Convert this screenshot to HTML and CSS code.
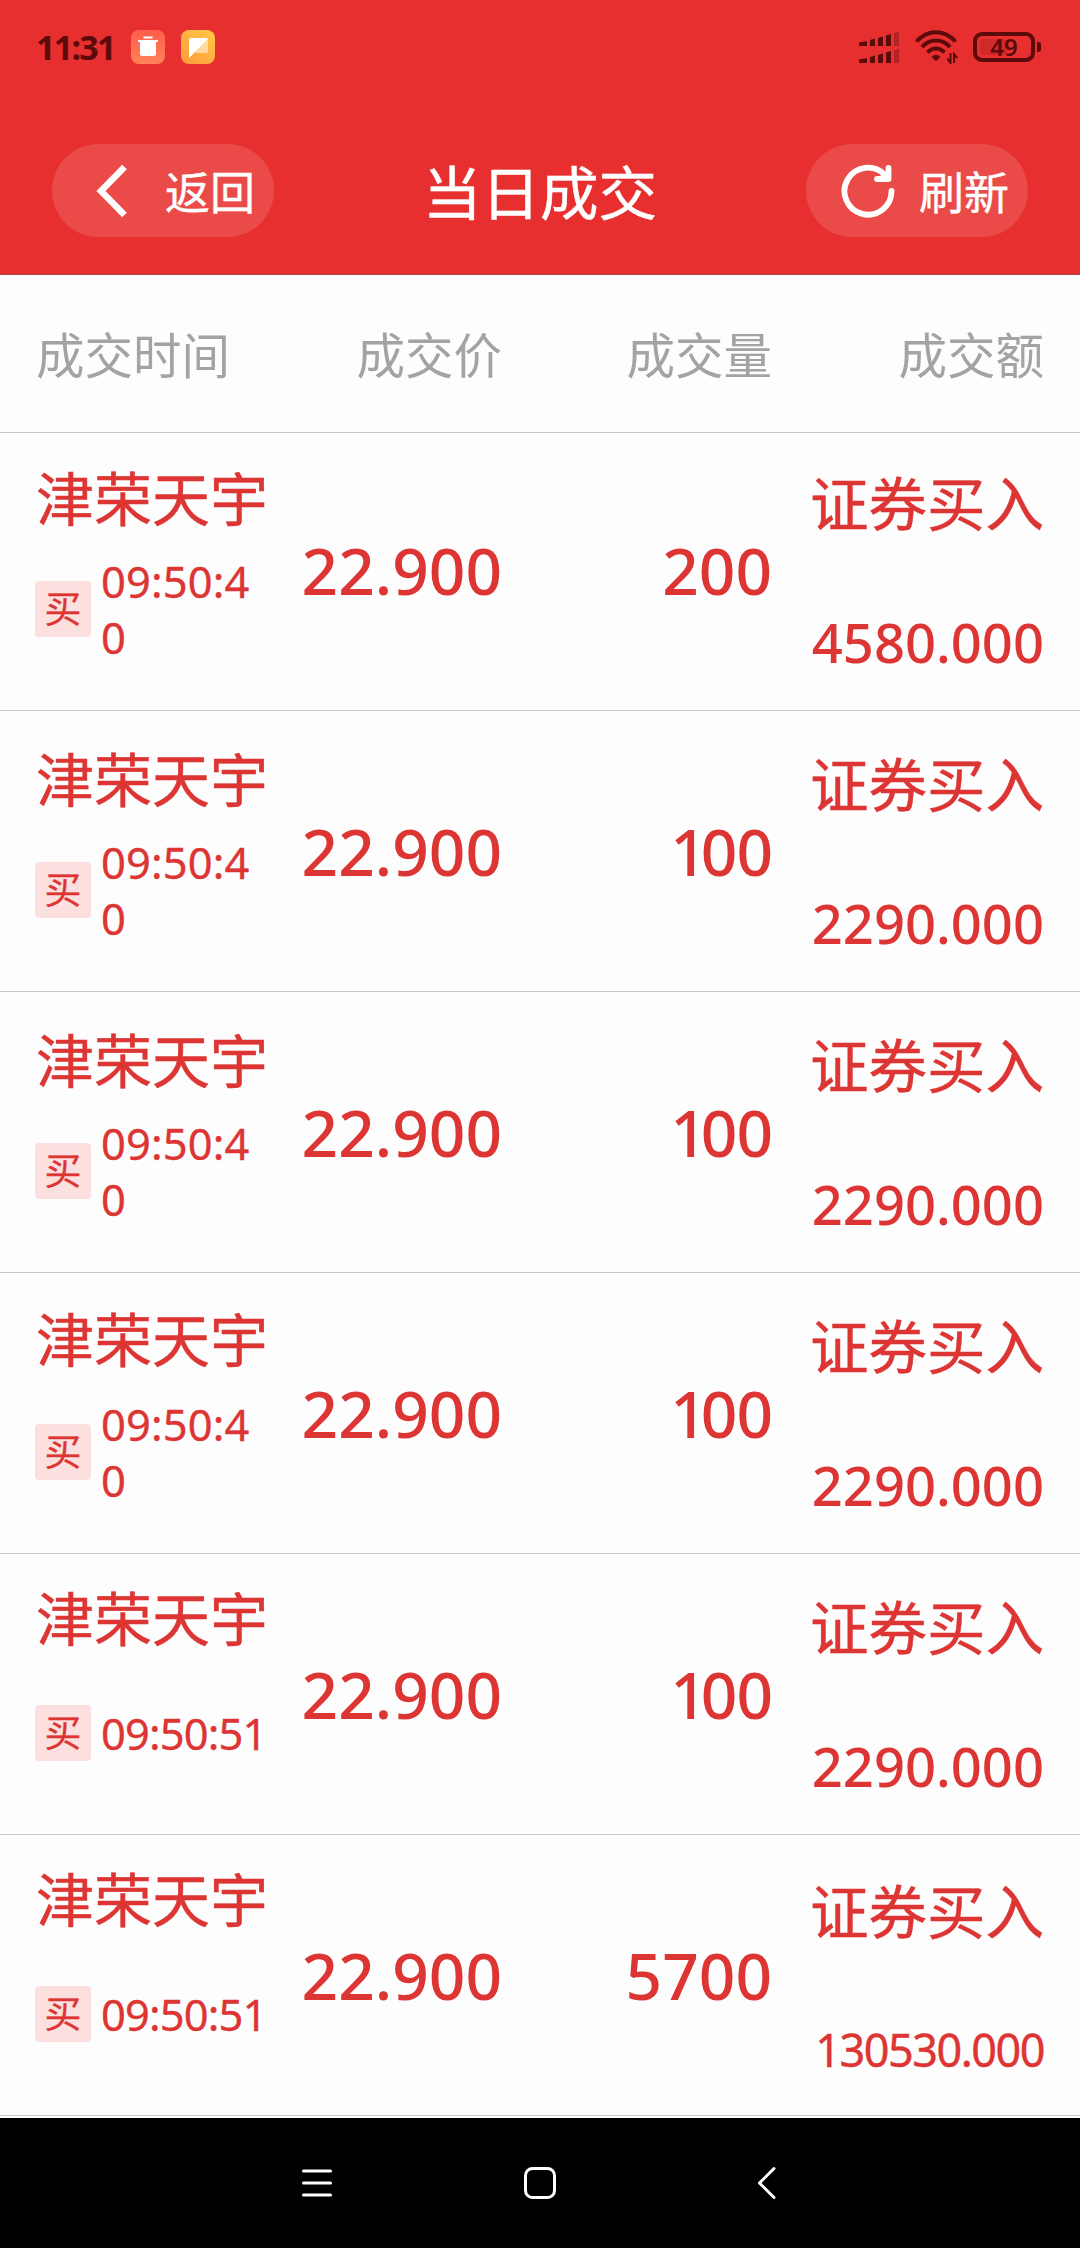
FILE: index.html
```html
<!DOCTYPE html>
<html lang="zh-CN">
<head>
  <meta charset="UTF-8" />
  <meta name="viewport" content="width=device-width, initial-scale=1.0" />
  <title>当日成交</title>
  <link rel="stylesheet" href="styles.css">
</head>
<body>

  <header>
    <div class="status-bar">
      <div class="status-left">
        <span class="clock">11:31</span>
        <svg class="app-icon" viewBox="0 0 34 34">
          <defs>
            <linearGradient id="trashBg" x1="0" y1="0" x2="0" y2="1">
              <stop offset="0" stop-color="#ff5e4c" />
              <stop offset="1" stop-color="#ff8258" />
            </linearGradient>
          </defs>
          <rect width="34" height="34" rx="8" fill="url(#trashBg)" />
          <path d="M12.500 6.500h9v2h-9zM7 10h20v2h-2V24q0 2-2 2H11q-2 0-2-2V12H7z" fill="#fff" />
        </svg>
        <svg class="app-icon" viewBox="0 0 34 34">
          <defs>
            <linearGradient id="noteBg" x1="1" y1="0" x2="0.300" y2="1">
              <stop offset="0" stop-color="#ffc848" />
              <stop offset="1" stop-color="#ffa03c" />
            </linearGradient>
          </defs>
          <rect width="34" height="34" rx="8" fill="url(#noteBg)" />
          <path d="M27 9v12q0 2-2 2H13z" fill="#fff" opacity="0.500" />
          <path d="M8 28V10q0-2 2-2h15q2 0 2 1z" fill="#fff" />
        </svg>
      </div>
      <div class="status-right">
        <svg class="signal" viewBox="0 0 40 31">
          <g fill="#5c0a0a">
            <path d="M0 10.500L8 9v5H1q-1 0-1-1zM11 8L16 6.500V14h-5zM19 6L24 4.500V14h-5zM27 3.500L32 2V14h-5z" />
            <path d="M0 27.500L8 26v5H1q-1 0-1-1zM11 25L16 23.500V31h-5zM19 23L24 21.500V31h-5zM27 20.500L32 19V31h-5z" />
          </g>
          <path d="M35 1.500Q37 0 40 0v14h-5zM35 18.500Q37 17 40 17v14h-5z" fill="#b32224" />
        </svg>
        <svg class="wifi" viewBox="0 0 44 34">
          <g fill="none" stroke="#5c0a0a" stroke-width="4">
            <path d="M1.500 11.500Q10 2.300 21 2.300T40.500 11.500" />
            <path d="M7 17Q13 10.500 21 10.500T35 17" />
            <path d="M12.500 22.500Q16 18.500 21 18.500T29.500 22.500" />
          </g>
          <path d="M16.500 27Q21 22.500 25.500 27L21 31z" fill="#5c0a0a" />
          <path d="M32.300 28.500L35.500 33V23M39 33V24l3.300 4" fill="none" stroke="#5c0a0a" stroke-width="2" />
        </svg>
        <div class="battery"><span class="battery-fill"></span><b>49</b></div>
      </div>
    </div>

    <div class="title-bar">
      <button class="pill back">
        <svg viewBox="0 0 54 54">
          <path d="M37.500 3L14 27l23.500 24" fill="none" stroke="#fff" stroke-width="6.500" />
        </svg>
        <span>返回</span>
      </button>
      <h1>当日成交</h1>
      <button class="pill refresh">
        <svg viewBox="0 0 54 54">
          <g fill="none" stroke="#fff" stroke-width="5.800" stroke-linecap="round" stroke-linejoin="round">
            <path d="M50.500 27A23.500 23.500 0 1 1 43.600 10.500" />
            <path d="M47.500 4V15H36" />
          </g>
          <path d="M40 9l8-2v9h-9z" fill="#fff" />
        </svg>
        <span>刷新</span>
      </button>
    </div>
  </header>

  <main>
    <div class="row head">
      <span>成交时间</span>
      <span>成交价</span>
      <span>成交量</span>
      <span>成交额</span>
    </div>

    <div class="row">
      <div class="stock">
        <div class="name">津荣天宇</div>
        <div class="time"><i class="badge">买</i><span>09:50:4<br>0</span></div>
      </div>
      <div class="price">22.900</div>
      <div class="qty">200</div>
      <div class="amount"><span class="type">证券买入</span><span class="sum">4580.000</span></div>
    </div>

    <div class="row">
      <div class="stock">
        <div class="name">津荣天宇</div>
        <div class="time"><i class="badge">买</i><span>09:50:4<br>0</span></div>
      </div>
      <div class="price">22.900</div>
      <div class="qty hundred">100</div>
      <div class="amount"><span class="type">证券买入</span><span class="sum">2290.000</span></div>
    </div>

    <div class="row">
      <div class="stock">
        <div class="name">津荣天宇</div>
        <div class="time"><i class="badge">买</i><span>09:50:4<br>0</span></div>
      </div>
      <div class="price">22.900</div>
      <div class="qty hundred">100</div>
      <div class="amount"><span class="type">证券买入</span><span class="sum">2290.000</span></div>
    </div>

    <div class="row tight">
      <div class="stock">
        <div class="name">津荣天宇</div>
        <div class="time"><i class="badge">买</i><span>09:50:4<br>0</span></div>
      </div>
      <div class="price">22.900</div>
      <div class="qty hundred">100</div>
      <div class="amount"><span class="type">证券买入</span><span class="sum">2290.000</span></div>
    </div>

    <div class="row single">
      <div class="stock">
        <div class="name">津荣天宇</div>
        <div class="time"><i class="badge">买</i><span>09:50:51</span></div>
      </div>
      <div class="price">22.900</div>
      <div class="qty hundred">100</div>
      <div class="amount"><span class="type">证券买入</span><span class="sum">2290.000</span></div>
    </div>

    <div class="row single">
      <div class="stock">
        <div class="name">津荣天宇</div>
        <div class="time"><i class="badge">买</i><span>09:50:51</span></div>
      </div>
      <div class="price">22.900</div>
      <div class="qty">5700</div>
      <div class="amount small"><span class="type">证券买入</span><span class="sum">130530.000</span></div>
    </div>
  </main>

  <nav class="nav-bar">
    <svg viewBox="0 0 34 34"><path d="M3.500 5h27M3.500 17h27M3.500 29h27" /></svg>
    <svg viewBox="0 0 34 34"><rect x="2.500" y="2.500" width="29" height="29" rx="7" /></svg>
    <svg viewBox="0 0 34 34"><path d="M28 2.500L13.500 17 28 31.500" /></svg>
  </nav>

</body>
</html>
```
FILE: styles.css
```css
:root {
  --red: #e72f2f;
  --text-red: #dc3534;
  --dark: #5c0a0a;
  --line: #c8c8c8;
}

* {
  box-sizing: border-box;
}

body {
  margin: 0;
  height: 2248px;
  display: flex;
  flex-direction: column;
  background: #fdfdfd;
  font-family: "Noto Sans", "Noto Sans CJK SC", sans-serif;
  overflow: hidden;
}

header {
  height: 275px;
  background: var(--red);
  border-bottom: 1px solid #a85050;
}

/* status bar */
.status-bar {
  height: 94px;
  padding: 0 39px 0 36px;
  display: flex;
  justify-content: space-between;
  align-items: center;
}

.status-left, .status-right {
  display: flex;
  align-items: center;
}

.clock {
  width: 95px;
  font-size: 34px;
  line-height: 40px;
  font-weight: 700;
  letter-spacing: -1.7px;
  color: var(--dark);
}

.app-icon {
  width: 34px;
  height: 34px;
  margin-right: 16px;
}

.signal {
  width: 40px;
  height: 31px;
  margin-right: 16px;
}

.wifi {
  width: 44px;
  height: 34px;
  margin-right: 14px;
}

.battery {
  position: relative;
  width: 62px;
  height: 30px;
  margin-right: 6px;
  border: 4px solid var(--dark);
  border-radius: 9px;
  color: var(--dark);
  text-align: center;
}

.battery b {
  position: relative;
  display: block;
  font-size: 24px;
  line-height: 22px;
  font-weight: 600;
}

.battery-fill {
  position: absolute;
  left: 3px;
  top: 3px;
  width: 27px;
  height: 16px;
  border-radius: 3px;
  background: #cf292a;
}

.battery::after {
  content: "";
  position: absolute;
  right: -10px;
  top: 6px;
  width: 4px;
  height: 10px;
  border-radius: 0 3px 3px 0;
  background: var(--dark);
}

/* title bar */
.title-bar {
  padding: 50px 52px 0;
  display: flex;
  justify-content: space-between;
  align-items: center;
}

h1 {
  margin: 0;
  font-size: 58.5px;
  line-height: 96px;
  height: 93px;
  font-weight: 400;
  color: #fff;
  -webkit-text-stroke: 0.5px;
}

.pill {
  width: 222px;
  height: 93px;
  padding: 0 19px 0 35px;
  border: none;
  border-radius: 47px;
  background: #ea4a48;
  color: #fff;
  font-family: inherit;
  font-size: 45px;
  display: flex;
  justify-content: space-between;
  align-items: center;
}

.pill svg {
  width: 54px;
  height: 54px;
}

.pill span {
  -webkit-text-stroke: 0.4px;
}

/* table */
main {
  flex: 1;
}

.row {
  height: 281px;
  padding: 3px 36px 0;
  display: grid;
  grid-template-columns: 231px 235px 270px 272px;
  border-bottom: 1px solid var(--line);
  color: var(--text-red);
  text-align: right;
}

.head {
  height: 158px;
  padding-top: 0;
  font-size: 48.5px;
  line-height: 160px;
  color: #a3a3a3;
}

.head span:first-child {
  text-align: left;
}

.head + .row {
  height: 278px;
  padding-top: 0;
}

.stock {
  text-align: left;
}

.name {
  height: 80px;
  margin-top: 26px;
  font-size: 58px;
  line-height: 80px;
  white-space: nowrap;
  -webkit-text-stroke: 0.5px;
}

.time {
  height: 112px;
  margin-top: 14px;
  display: flex;
  align-items: center;
  font-size: 43.5px;
  line-height: 56px;
  letter-spacing: 0.1px;
  -webkit-text-stroke: 0.3px;
}

.tight .name {
  margin-top: 24px;
}

.tight .time {
  margin-top: 16px;
}

.single .name {
  margin-top: 22px;
}

.single .time {
  margin-top: 18px;
  letter-spacing: -0.9px;
}

.badge {
  flex: none;
  width: 56px;
  height: 56px;
  margin: 0 10px 0 -1px;
  border-radius: 4px;
  background: #fcdfdf;
  font-size: 37px;
  font-style: normal;
  letter-spacing: 0;
  text-align: center;
}

.price, .qty {
  font-size: 64px;
  line-height: 276px;
  font-weight: 500;
}

/* narrow leading 1 */
.hundred::first-letter {
  letter-spacing: -6px;
}

.hundred {
  letter-spacing: -1px;
}

.amount {
  display: flex;
  flex-direction: column;
}

.type {
  margin-top: 31px;
  font-size: 58.5px;
  line-height: 79px;
  height: 80px;
  -webkit-text-stroke: 0.5px;
}

.sum {
  margin-top: 58px;
  font-size: 54.3px;
  line-height: 80px;
  font-weight: 500;
}

.small .type {
  margin-top: 34px;
}

.small .sum {
  font-size: 45px;
  font-weight: 400;
  letter-spacing: -1.5px;
  -webkit-text-stroke: 0.4px;
}

/* system navigation */
.nav-bar {
  height: 130px;
  padding: 48px 0 0 300px;
  display: flex;
  gap: 189px;
  background: #000;
}

.nav-bar svg {
  width: 34px;
  height: 34px;
  fill: none;
  stroke: #fff;
  stroke-width: 3;
  stroke-linecap: round;
  stroke-linejoin: round;
}
```
